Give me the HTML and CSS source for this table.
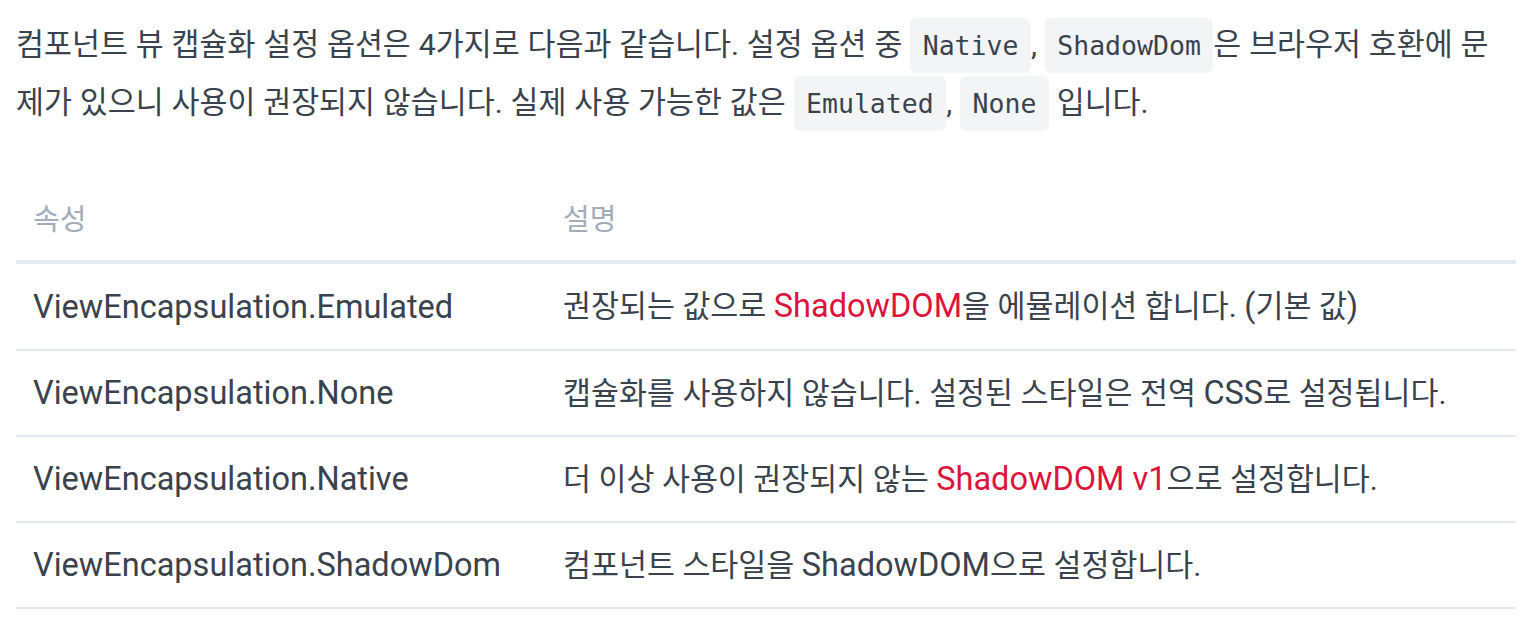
FILE: index.html
```html
<!DOCTYPE html>
<html lang="ko">
<head>
<meta charset="utf-8">
<link rel="stylesheet" href="styles.css">
</head>
<body>
<div class="content">
  <p class="intro">컴포넌트 뷰 캡슐화 설정 옵션은 4가지로 다음과 같습니다. 설정 옵션 중 <code>Native</code>, <code>ShadowDom</code>은 브라우저 호환에 문제가 있으니 사용이 권장되지 않습니다. 실제 사용 가능한 값은 <code>Emulated</code>, <code>None</code> 입니다.</p>
  <table class="opts">
    <thead>
      <tr><th class="col-name">속성</th><th>설명</th></tr>
    </thead>
    <tbody>
      <tr><td class="name">ViewEncapsulation.Emulated</td><td class="desc">권장되는 값으로 <span class="en hl">ShadowDOM</span>을 에뮬레이션 합니다. <span class="en">(</span>기본 값<span class="en">)</span></td></tr>
      <tr><td class="name">ViewEncapsulation.None</td><td class="desc">캡슐화를 사용하지 않습니다. 설정된 스타일은 전역 <span class="en">CSS</span>로 설정됩니다.</td></tr>
      <tr><td class="name">ViewEncapsulation.Native</td><td class="desc">더 이상 사용이 권장되지 않는 <span class="en hl">ShadowDOM v1</span>으로 설정합니다.</td></tr>
      <tr><td class="name">ViewEncapsulation.ShadowDom</td><td class="desc">컴포넌트 스타일을 <span class="en">ShadowDOM</span>으로 설정합니다.</td></tr>
    </tbody>
  </table>
</div>
</body>
</html>
```
FILE: styles.css
```css
html, body {
  margin: 0;
  padding: 0;
  background: #ffffff;
}
.content {
  padding: 0 16px;
  color: #3a434d;
  font-family: Roboto, "Noto Sans CJK KR", sans-serif;
}
.intro {
  margin: 16px 0 0 0;
  font-size: 30.4px;
  line-height: 58px;
  word-spacing: 0.3px;
}
.intro code {
  font-family: "DejaVu Sans Mono", monospace;
  font-size: 26.5px;
  line-height: 1;
  background: #f3f4f6;
  border-radius: 6px;
  padding: 12px 12.5px;
  color: #3a434d;
  word-spacing: 0;
}
.opts {
  margin-top: 42px;
  width: 1500px;
  table-layout: fixed;
  border-collapse: collapse;
  line-height: 36px;
}
.opts th {
  text-align: left;
  font-weight: 400;
  color: #a3adba;
  font-size: 29px;
  padding: 28px 17px 22px;
  border-bottom: 4px solid #e5e9f0;
}
.opts th.col-name {
  width: 496px;
}
.opts td {
  padding: 0 17px;
  height: 84px;
  vertical-align: middle;
  border-bottom: 2px solid #e6eaf0;
  white-space: nowrap;
}
.opts tbody tr:first-child td {
  height: 85px;
}
.opts td.name {
  font-size: 32.5px;
}
.opts td.desc {
  font-size: 30.4px;
}
.opts .en {
  font-size: 32.5px;
}
.hl {
  color: #dc143c;
}
```
